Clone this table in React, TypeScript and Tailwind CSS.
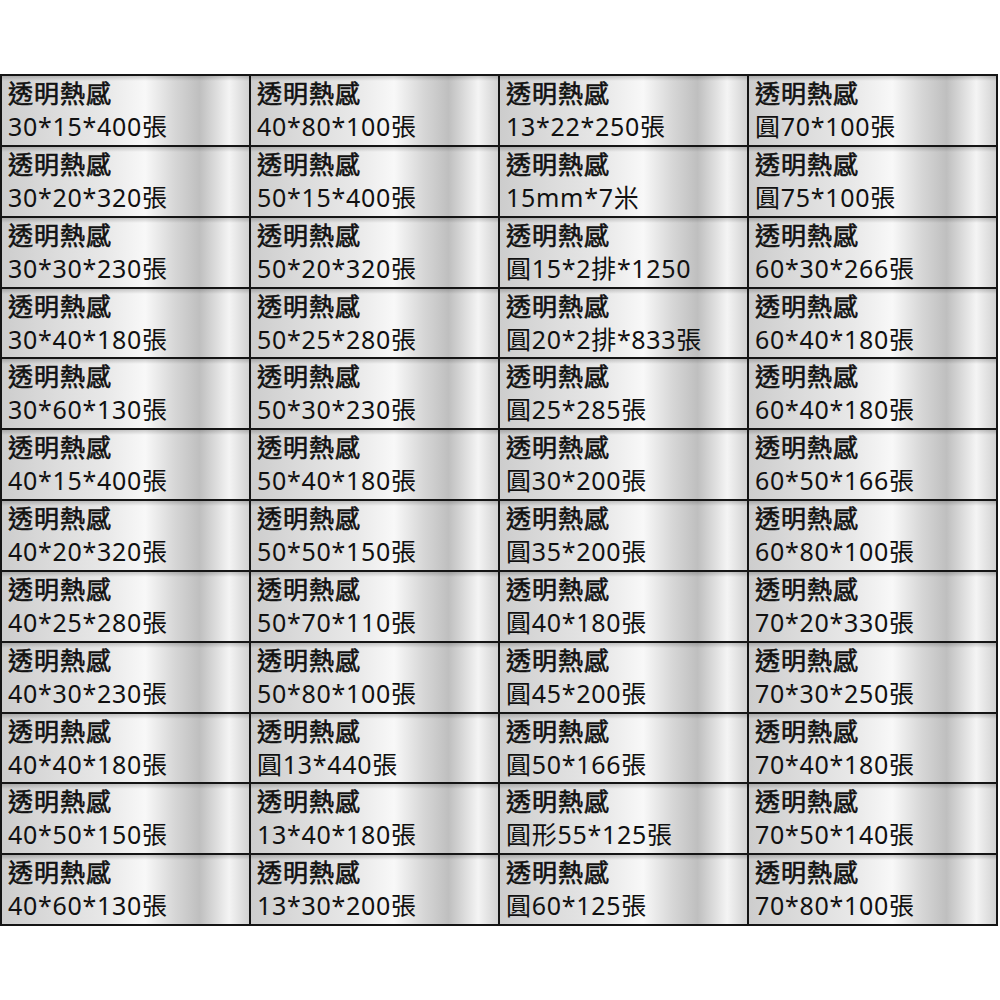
import React from "react";

const cols: string[][] = [
  ["30*15*400張", "30*20*320張", "30*30*230張", "30*40*180張", "30*60*130張", "40*15*400張", "40*20*320張", "40*25*280張", "40*30*230張", "40*40*180張", "40*50*150張", "40*60*130張"],
  ["40*80*100張", "50*15*400張", "50*20*320張", "50*25*280張", "50*30*230張", "50*40*180張", "50*50*150張", "50*70*110張", "50*80*100張", "圓13*440張", "13*40*180張", "13*30*200張"],
  ["13*22*250張", "15mm*7米", "圓15*2排*1250", "圓20*2排*833張", "圓25*285張", "圓30*200張", "圓35*200張", "圓40*180張", "圓45*200張", "圓50*166張", "圓形55*125張", "圓60*125張"],
  ["圓70*100張", "圓75*100張", "60*30*266張", "60*40*180張", "60*40*180張", "60*50*166張", "60*80*100張", "70*20*330張", "70*30*250張", "70*40*180張", "70*50*140張", "70*80*100張"],
];

const cells: string[] = [];
for (let r = 0; r < 12; r++) for (let c = 0; c < 4; c++) cells.push(cols[c][r]);

export default function App() {
  return (
    <div className="w-[1000px] h-[1000px] bg-white pt-[74px]" style={{ fontFamily: '"Noto Sans", "Noto Sans CJK TC", sans-serif' }}>
      <div className="w-[998px] h-[852px] bg-[#151515] p-[2px] grid grid-cols-4 grid-rows-12 gap-[2px]">
        {cells.map((t, i) => (
          <div
            key={i}
            className="relative overflow-hidden pl-[6px] text-[#111] bg-[linear-gradient(90deg,#cdcdcd_0%,#dcdcdc_22%,#e8e8e8_42%,#f8f8f8_58%,#d6d6d6_70%,#bfbfbf_80%,#f4f4f4_92%,#d2d2d2_100%)]"
          >
            <div className="absolute inset-x-0 top-0 h-[5px] bg-[linear-gradient(180deg,rgba(0,0,0,0.18),rgba(0,0,0,0))]" />
            <div className="relative text-[25px] leading-[34px] tracking-[1px] [-webkit-text-stroke:0.6px_#111]">透明熱感</div>
            <div className="relative text-[25px] leading-[33px] tracking-[0.7px] whitespace-nowrap">{t}</div>
          </div>
        ))}
      </div>
    </div>
  );
}
